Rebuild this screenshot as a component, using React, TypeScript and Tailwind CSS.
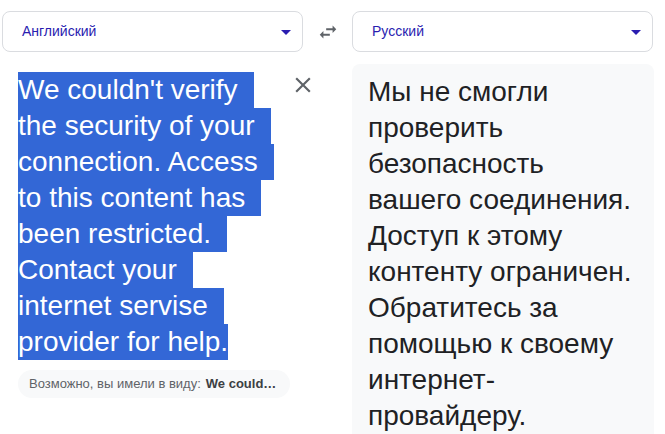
const sourceLines = [
  "We couldn't verify",
  "the security of your",
  "connection. Access",
  "to this content has",
  "been restricted.",
  "Contact your",
  "internet servise",
  "provider for help.",
]

const targetLines = [
  "Мы не смогли",
  "проверить",
  "безопасность",
  "вашего соединения.",
  "Доступ к этому",
  "контенту ограничен.",
  "Обратитесь за",
  "помощью к своему",
  "интернет-",
  "провайдеру.",
]

function DropArrow() {
  return (
    <svg viewBox="0 0 24 24" className="w-6 h-6 fill-[#2a1db0]">
      <path d="M7 10l5 5 5-5z" />
    </svg>
  )
}

function LangSelect({ label }: { label: string }) {
  return (
    <div className="w-[301px] h-[41px] border border-[#dadce0] rounded-lg flex items-center justify-between pl-[19px] pr-[4px]">
      <span className="text-[14px] text-[#2a1db0]">{label}</span>
      <DropArrow />
    </div>
  )
}

export default function App() {
  return (
    <div className="w-[665px] h-[434px] overflow-hidden bg-white font-['Liberation_Sans',Arial,sans-serif]">
      <div className="flex items-center pt-[11px] pl-[2px]">
        <LangSelect label="Английский" />
        <div className="w-[49px] flex justify-center">
          <svg viewBox="0 0 24 24" className="w-[22px] h-[22px] fill-[#5f6368]">
            <path d="M6.99 11L3 15l3.99 4v-3H14v-2H6.99v-3zM21 9l-3.99-4v3H10v2h7.01v3L21 9z" />
          </svg>
        </div>
        <LangSelect label="Русский" />
      </div>

      <div className="flex mt-[12px] pl-[2px]">
        <div className="w-[301px] flex items-start justify-between">
          <div className="pl-[16px] pt-[8px]">
            <div className="text-[28px] leading-[36px] text-white">
              {sourceLines.map((line, i) => (
                <div
                  key={i}
                  className={
                    i === sourceLines.length - 1
                      ? "w-fit bg-[#3367d6] whitespace-nowrap"
                      : "w-fit bg-[#3367d6] whitespace-nowrap pr-4"
                  }
                >
                  {line}
                </div>
              ))}
            </div>
            <div className="mt-[10px] w-fit h-[28px] rounded-full bg-[#f8f9fa] flex items-center pl-[11px] pr-[14px] text-[13px] whitespace-nowrap">
              <span className="text-[#5f6368]">Возможно, вы имели в виду:</span>
              <span className="ml-[5px] font-bold text-[#3c4043]">We could…</span>
            </div>
          </div>
          <button className="mt-[8px] mr-[-5px]">
            <svg viewBox="0 0 24 24" className="w-[26px] h-[26px] fill-[#5f6368]">
              <path d="M19 6.41L17.59 5 12 10.59 6.41 5 5 6.41 10.59 12 5 17.59 6.41 19 12 13.41 17.59 19 19 17.59 13.41 12z" />
            </svg>
          </button>
        </div>

        <div className="ml-[49px] w-[302px] h-[400px] bg-[#f8f9fa] rounded-t-lg pt-[10px] pl-[16px]">
          <div className="text-[28px] leading-[36px] text-[#202124]">
            {targetLines.map((line, i) => (
              <div key={i} className="whitespace-nowrap">
                {line}
              </div>
            ))}
          </div>
        </div>
      </div>
    </div>
  )
}
